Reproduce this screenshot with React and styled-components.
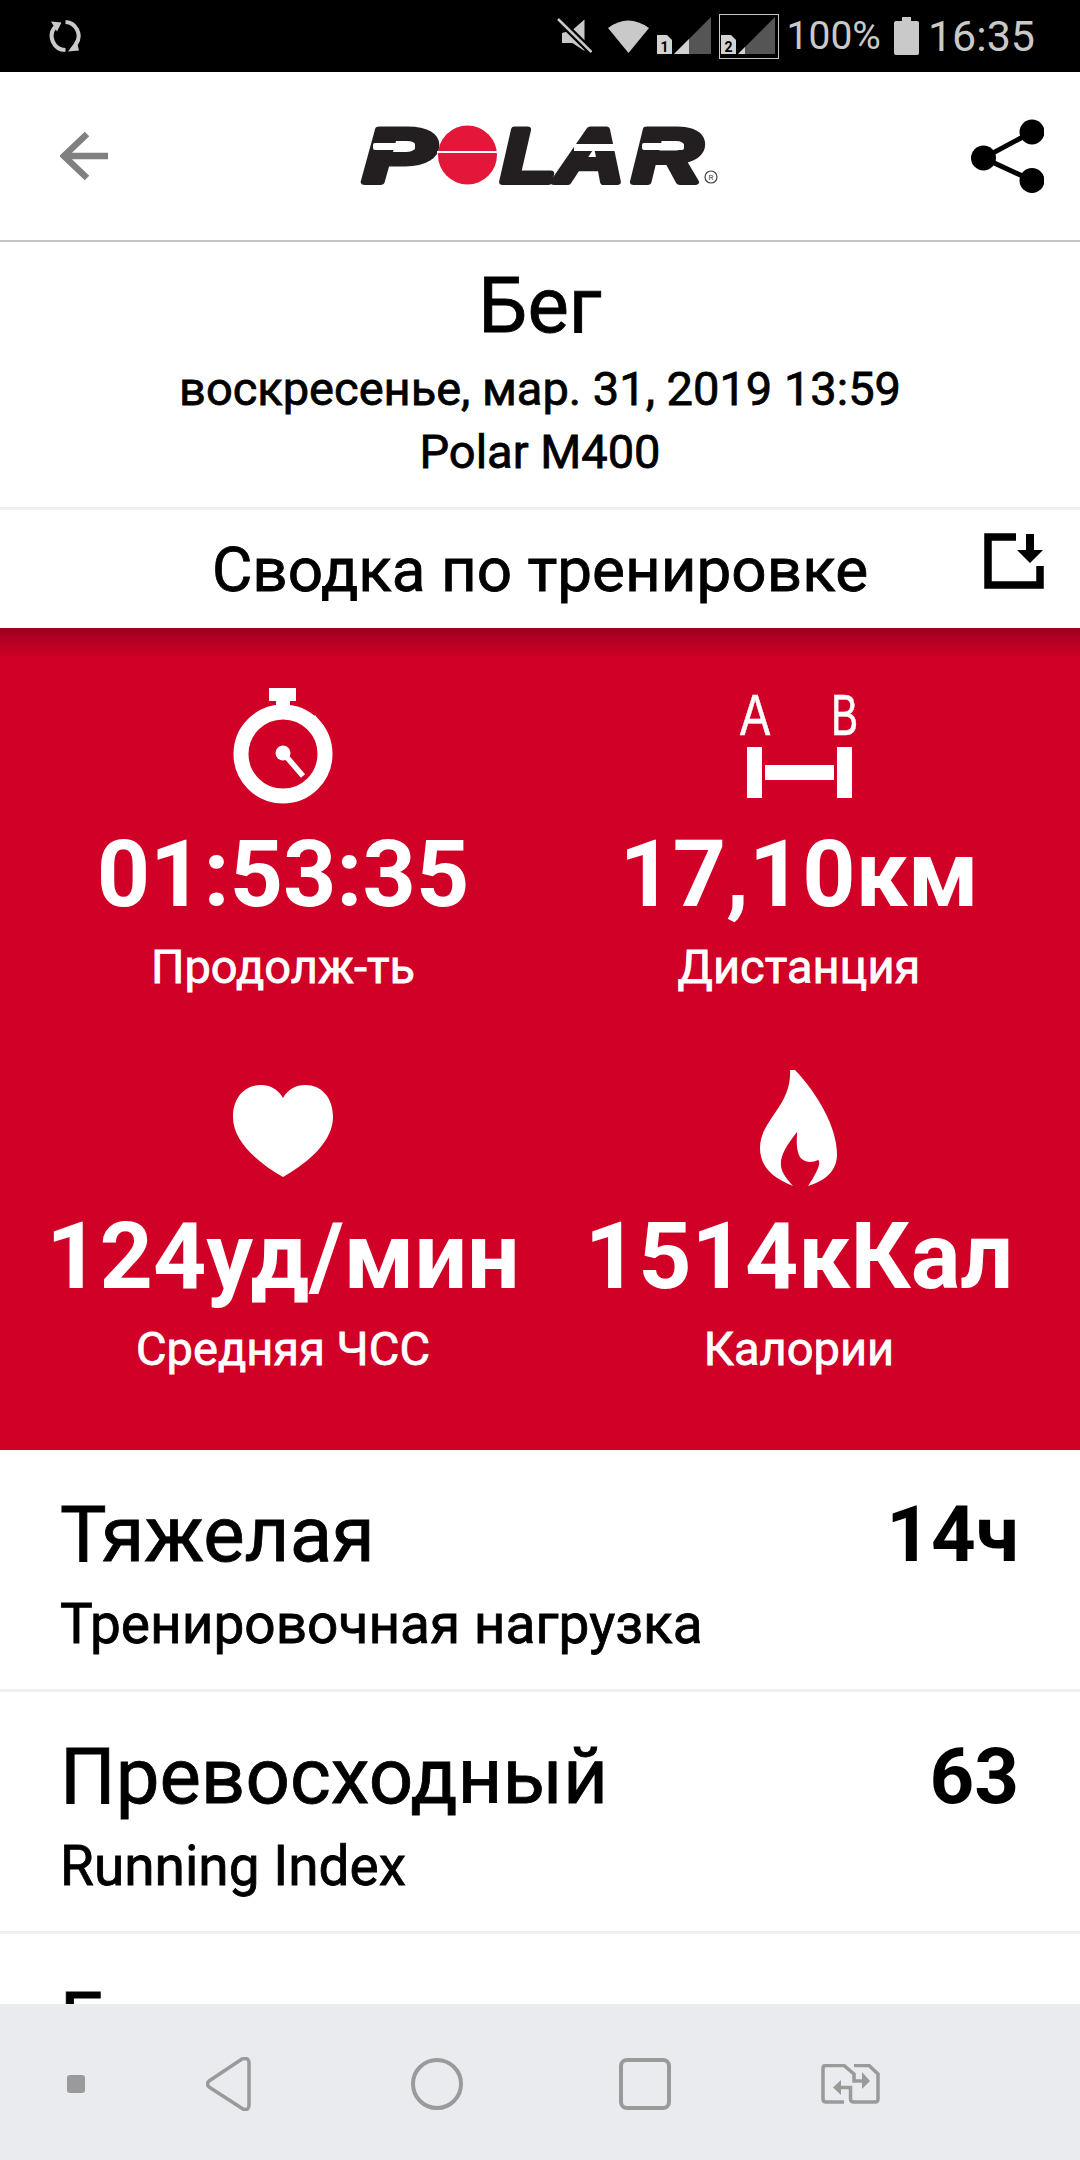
import React from "react";
import styled, { createGlobalStyle } from "styled-components";

const GlobalStyle = createGlobalStyle`
  html, body {
    margin: 0;
    padding: 0;
    background: #fff;
  }
  body {
    font-family: Roboto, "Noto Sans", sans-serif;
    font-weight: 400;
    -webkit-text-stroke: 0.8px currentColor;
    color: #000;
  }
`;

const Screen = styled.div`
  display: flex;
  flex-direction: column;
  width: 1080px;
  height: 2160px;
  overflow: hidden;
`;

const StatusBar = styled.div`
  display: flex;
  align-items: center;
  flex: 0 0 72px;
  padding: 0 45px 0 48px;
  background: #000;
  color: #c9c9c9;
`;

const StatusRight = styled.div`
  display: flex;
  align-items: center;
  margin-left: auto;
`;

const StatusIcon = styled.div`
  display: flex;
  margin-left: ${(p) => p.$left || 0}px;
`;

const StatusText = styled.span`
  font-size: ${(p) => p.$size}px;
  line-height: 72px;
  margin: ${(p) => p.$margin || "0"};
  -webkit-text-stroke: 0;
`;

const Sim2Box = styled.div`
  display: flex;
  align-items: center;
  height: 43px;
  padding: 0 3px 0 1px;
  border: 1px solid #c9c9c9;
  margin-left: 8px;
`;

const Header = styled.header`
  display: flex;
  align-items: center;
  justify-content: space-between;
  flex: 0 0 170px;
  padding: 0 36px 0 60px;
  border-bottom: 2px solid #c4c4c4;
  box-sizing: border-box;
`;

const Body = styled.main`
  flex: 1;
  min-height: 0;
  overflow: hidden;
`;

const Summary = styled.section`
  display: flex;
  flex-direction: column;
  align-items: center;
  height: 265px;
`;

const Title = styled.h1`
  margin: 20px 0 0;
  font-size: 78px;
  font-weight: 400;
  line-height: 88px;
`;

const Meta = styled.div`
  font-size: 47px;
  line-height: 63px;
  &:first-of-type {
    margin-top: 7px;
  }
`;

const SectionBar = styled.div`
  position: relative;
  display: flex;
  align-items: center;
  justify-content: center;
  height: 118px;
  border-top: 3px solid #f0f0f0;
`;

const SectionTitle = styled.h2`
  margin: 0;
  font-size: 62px;
  font-weight: 400;
`;

const SaveButton = styled.div`
  position: absolute;
  top: 23px;
  right: 36px;
  line-height: 0;
`;

const StatsPanel = styled.section`
  position: relative;
  display: grid;
  grid-template-columns: 516px 516px;
  justify-content: center;
  grid-auto-rows: 382px;
  height: 822px;
  padding: 52px 23px 0 25px;
  box-sizing: border-box;
  background: #d00027;
  color: #fff;
  &::before {
    content: "";
    position: absolute;
    top: 0;
    left: 0;
    right: 0;
    height: 30px;
    background: linear-gradient(rgba(90, 0, 20, 0.42), rgba(90, 0, 20, 0));
  }
`;

const Stat = styled.div`
  display: flex;
  flex-direction: column;
  align-items: center;
`;

const StatIcon = styled.div`
  display: flex;
  align-items: flex-end;
  justify-content: center;
  height: 124px;
  line-height: 0;
`;

const StatValue = styled.div`
  margin-top: 17px;
  font-size: 93px;
  font-weight: 700;
  line-height: 108px;
  white-space: nowrap;
  -webkit-text-stroke: 0;
`;

const StatLabel = styled.div`
  margin-top: 12px;
  font-size: 47px;
  line-height: 52px;
`;

const Row = styled.div`
  display: flex;
  align-items: flex-start;
  justify-content: space-between;
  height: 242px;
  padding: 40px 61px 0 60px;
  box-sizing: border-box;
  border-bottom: 3px solid #f0f0f0;
  &:last-child {
    padding-top: 42px;
  }
`;

const RowTitle = styled.div`
  font-size: 78px;
  line-height: 90px;
`;

const RowSub = styled.div`
  font-size: 55px;
  line-height: 60px;
  margin-top: 14px;
`;

const RowValue = styled.div`
  font-size: 78px;
  font-weight: 700;
  line-height: 90px;
  -webkit-text-stroke: 0;
`;

const NavBar = styled.nav`
  display: flex;
  align-items: center;
  flex: 0 0 156px;
  padding: 4px 0 0 67px;
  box-sizing: border-box;
  background: #e9ebee;
`;

const NavDot = styled.div`
  width: 18px;
  height: 18px;
  border-radius: 3px;
  background: #9a9a9a;
`;

const NavSlot = styled.div`
  display: flex;
  margin-left: ${(p) => p.$left}px;
  line-height: 0;
`;

function SyncIcon() {
  return (
    <svg width="34" height="34" viewBox="0 0 34 34" fill="none" stroke="#c9c9c9" strokeWidth="4">
      <path d="M7 8 A14 14 0 0 0 17.5 31" />
      <path d="M3 2.5 L13.5 3.5 L9 12.5 Z" fill="#c9c9c9" stroke="none" />
      <path d="M17.5 3 A14 14 0 0 1 28 25" />
      <path d="M20 32.5 L31 31.5 L28.5 21 Z" fill="#c9c9c9" stroke="none" />
    </svg>
  );
}

function MuteIcon() {
  return (
    <svg width="35" height="36" viewBox="0 0 35 36" fill="#c9c9c9">
      <path d="M5 15 L15.5 12 L27.5 1.5 L27.5 33 L15.5 25 L5 25 Z" />
      <path d="M0 0 L34.5 34" stroke="#000" strokeWidth="7" />
      <path d="M1 1 L34.5 34" stroke="#c9c9c9" strokeWidth="2.5" />
    </svg>
  );
}

function WifiIcon() {
  return (
    <svg width="41" height="34" viewBox="0 0 41 34" fill="#c9c9c9">
      <path d="M0 9 Q20 -6 41 9 L20.5 34 Z" />
    </svg>
  );
}

function SignalIcon({ simNumber, filled }) {
  return (
    <svg width="54" height="38" viewBox="0 0 54 38">
      <path d="M0 18 L10 18 L15 23 L15 37 L0 37 Z" fill="#d2d2d2" />
      <text x="7.5" y="34.5" fontFamily="Roboto, sans-serif" fontSize="14" fontWeight="700" textAnchor="middle" fill="#000" stroke="none" style={{ WebkitTextStroke: 0 }}>
        {simNumber}
      </text>
      <path d="M17 37 L54 0 L54 37 Z" fill="#555" />
      <path d={`M17 37 L${17 + filled} ${37 - filled} L${17 + filled} 37 Z`} fill="#d2d2d2" />
    </svg>
  );
}

function BatteryIcon() {
  return (
    <svg width="25" height="38" viewBox="0 0 25 38" fill="#c9c9c9">
      <path d="M8 0 H17 V4 H23 Q25 4 25 6 V36 Q25 38 23 38 H2 Q0 38 0 36 V6 Q0 4 2 4 H8 Z" />
    </svg>
  );
}

function BackArrow() {
  return (
    <svg width="48" height="50" viewBox="0 0 48 50" fill="none" stroke="#808080" strokeWidth="6.5">
      <path d="M48 25 H4" />
      <path d="M27 3 L4 25 L27 47" />
    </svg>
  );
}

function PolarLogo() {
  const letters = {
    fontFamily: "'Liberation Sans', sans-serif",
    fontWeight: 700,
    fontStyle: "italic",
    fontSize: 76,
    fill: "#231f20",
    stroke: "#231f20",
    strokeWidth: 6,
    strokeLinejoin: "round",
    WebkitTextStroke: 0,
  };
  return (
    <svg width="358" height="58" viewBox="0 0 358 58" style={{ overflow: "visible" }}>
      <text x="2" y="55" textLength="72" lengthAdjust="spacingAndGlyphs" style={letters}>
        P
      </text>
      <circle cx="106.5" cy="28" r="29.5" fill="#e4173b" />
      <rect x="76" y="24" width="61" height="2" fill="#fff" />
      <text x="140" y="55" textLength="55" lengthAdjust="spacingAndGlyphs" style={letters}>
        L
      </text>
      <text x="195" y="55" textLength="68" lengthAdjust="spacingAndGlyphs" style={letters}>
        A
      </text>
      <text x="271" y="55" textLength="70" lengthAdjust="spacingAndGlyphs" style={letters}>
        R
      </text>
      <rect x="12" y="16" width="42" height="7" rx="2" fill="#fff" />
      <rect x="213" y="17" width="49" height="7" fill="#fff" />
      <rect x="281" y="16" width="42" height="7" rx="2" fill="#fff" />
      <circle cx="350" cy="50" r="6" fill="none" stroke="#444" strokeWidth="1.2" />
      <text x="350" y="53" fontSize="8" textAnchor="middle" fill="#444" stroke="none" fontFamily="Roboto, sans-serif" style={{ WebkitTextStroke: 0 }}>
        R
      </text>
    </svg>
  );
}

function ShareIcon() {
  return (
    <svg width="73" height="74" viewBox="0 0 73 74" fill="#000">
      <circle cx="61" cy="13" r="12.5" />
      <circle cx="12.5" cy="39" r="12.5" />
      <circle cx="61" cy="61.5" r="12.5" />
      <path d="M61 13 L12.5 39 L61 61.5" fill="none" stroke="#000" strokeWidth="5" />
    </svg>
  );
}

function SaveIcon() {
  return (
    <svg width="60" height="56" viewBox="0 0 60 56">
      <path d="M32 4 H4 V52 H56 V33" fill="none" stroke="#000" strokeWidth="7.5" />
      <path d="M42 1 H50 V17 H59 L46 30 L33 17 H42 Z" fill="#000" />
    </svg>
  );
}

function StopwatchIcon() {
  return (
    <svg width="100" height="116" viewBox="0 0 100 116" fill="#fff">
      <rect x="36" y="0" width="27" height="13" />
      <rect x="43" y="12" width="14" height="8" />
      <path d="M82 27 L91 38 L84 46 L76 36 Z" />
      <circle cx="50" cy="66" r="42" fill="none" stroke="#fff" strokeWidth="15" />
      <circle cx="50" cy="65" r="7.5" />
      <path d="M51 66 L70 88" stroke="#fff" strokeWidth="5.5" />
    </svg>
  );
}

function DistanceIcon() {
  const letter = {
    fontFamily: "'Liberation Sans', sans-serif",
    fontSize: 58,
    fill: "#fff",
    stroke: "#fff",
    strokeWidth: 0.6,
    WebkitTextStroke: 0,
  };
  return (
    <svg width="118" height="108" viewBox="0 0 118 108" fill="#fff" style={{ overflow: "visible" }}>
      <text transform="translate(0 39) scale(0.78 1)" style={letter}>A</text>
      <text transform="translate(91 39) scale(0.7 1)" style={letter}>B</text>
      <rect x="7" y="51" width="15" height="51" />
      <rect x="25" y="69" width="69" height="15" />
      <rect x="97" y="51" width="15" height="51" />
    </svg>
  );
}

function HeartIcon() {
  return (
    <svg width="100" height="101" viewBox="0 0 100 101" fill="#fff">
      <path d="M50 13 C45 4 37 0 28 0 C11 0 0 13 0 32 C0 55 22 76 50 92 C78 76 100 55 100 32 C100 13 89 0 72 0 C63 0 55 4 50 13 Z" />
    </svg>
  );
}

function FlameIcon() {
  return (
    <svg width="78" height="116" viewBox="0 0 78 116" fill="#fff">
      <path d="M30 0 L35 0 C58 24 77 58 77 84 C77 99 68 110 48 116 C56 104 62 92 58 90 C50 94 40 92 38 82 C36 74 37 70 37 62 C26 76 20 86 21 96 C22 104 28 110 33 116 C12 108 0 96 0 78 C0 50 32 36 30 0 Z" />
    </svg>
  );
}

function NavBack() {
  return (
    <svg width="46" height="54" viewBox="0 0 46 54" fill="none" stroke="#9a9a9a" strokeWidth="3.5">
      <path d="M3 24 L36 2 Q43 0 43 6 L43 48 Q43 54 37 52 L3 30 Q0 27 3 24 Z" strokeLinejoin="round" />
    </svg>
  );
}

function NavHome() {
  return (
    <svg width="52" height="52" viewBox="0 0 52 52" fill="none" stroke="#9a9a9a" strokeWidth="4">
      <circle cx="26" cy="26" r="24" />
    </svg>
  );
}

function NavRecent() {
  return (
    <svg width="52" height="52" viewBox="0 0 52 52" fill="none" stroke="#9a9a9a" strokeWidth="4">
      <rect x="2" y="2" width="48" height="48" rx="6" />
    </svg>
  );
}

function NavSwap() {
  return (
    <svg width="62" height="40" viewBox="0 0 62 40" fill="none" stroke="#9a9a9a" strokeWidth="3.5">
      <path d="M24 38 H6 Q3 38 3 35 V4 Q3 1.5 6 1.5 H24 L34 10 V17 H44" />
      <path d="M42 8 L50 17 L42 25 Z" fill="#9a9a9a" stroke="none" />
      <path d="M21 16 L13 23.5 L21 31 Z" fill="#9a9a9a" stroke="none" />
      <path d="M21 23.5 H30.5 V35 Q30.5 38 34 38 H55 Q58 38 58 35 V10 L49 1.5 H34" />
    </svg>
  );
}

const stats = [
  { icon: <StopwatchIcon />, value: "01:53:35", label: "Продолж-ть" },
  { icon: <DistanceIcon />, value: "17,10км", label: "Дистанция" },
  { icon: <HeartIcon />, value: "124уд/мин", label: "Средняя ЧСС" },
  { icon: <FlameIcon />, value: "1514кКал", label: "Калории" },
];

const rows = [
  { title: "Тяжелая", sub: "Тренировочная нагрузка", value: "14ч" },
  { title: "Превосходный", sub: "Running Index", value: "63" },
  { title: "Базовая, длительная", sub: "", value: "" },
];

export default function App() {
  return (
    <Screen>
      <GlobalStyle />
      <StatusBar>
        <SyncIcon />
        <StatusRight>
          <MuteIcon />
          <StatusIcon $left={16}>
            <WifiIcon />
          </StatusIcon>
          <StatusIcon $left={8}>
            <SignalIcon simNumber="1" filled={15} />
          </StatusIcon>
          <Sim2Box>
            <SignalIcon simNumber="2" filled={7} />
          </Sim2Box>
          <StatusText $size={39} $margin="0 13px 0 8px">100%</StatusText>
          <BatteryIcon />
          <StatusText $size={43} $margin="0 0 0 9px">16:35</StatusText>
        </StatusRight>
      </StatusBar>
      <Header>
        <BackArrow />
        <PolarLogo />
        <ShareIcon />
      </Header>
      <Body>
        <Summary>
          <Title>Бег</Title>
          <Meta>воскресенье, мар. 31, 2019 13:59</Meta>
          <Meta>Polar M400</Meta>
        </Summary>
        <SectionBar>
          <SectionTitle>Сводка по тренировке</SectionTitle>
          <SaveButton>
            <SaveIcon />
          </SaveButton>
        </SectionBar>
        <StatsPanel>
          {stats.map((s) => (
            <Stat key={s.label}>
              <StatIcon>{s.icon}</StatIcon>
              <StatValue>{s.value}</StatValue>
              <StatLabel>{s.label}</StatLabel>
            </Stat>
          ))}
        </StatsPanel>
        {rows.map((r) => (
          <Row key={r.title}>
            <div>
              <RowTitle>{r.title}</RowTitle>
              <RowSub>{r.sub}</RowSub>
            </div>
            <RowValue>{r.value}</RowValue>
          </Row>
        ))}
      </Body>
      <NavBar>
        <NavDot />
        <NavSlot $left={121}>
          <NavBack />
        </NavSlot>
        <NavSlot $left={159}>
          <NavHome />
        </NavSlot>
        <NavSlot $left={156}>
          <NavRecent />
        </NavSlot>
        <NavSlot $left={149}>
          <NavSwap />
        </NavSlot>
      </NavBar>
    </Screen>
  );
}
